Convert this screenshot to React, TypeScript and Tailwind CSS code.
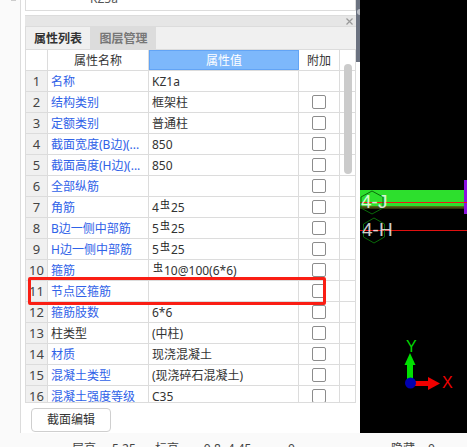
const rows = [
  { name: '名称', value: 'KZ1a', link: true, noCheck: true },
  { name: '结构类别', value: '框架柱', link: true },
  { name: '定额类别', value: '普通柱', link: true },
  { name: '截面宽度(B边)(...', value: '850', link: true },
  { name: '截面高度(H边)(...', value: '850', link: true },
  { name: '全部纵筋', value: '', link: true },
  { name: '角筋', value: '4#25', link: true },
  { name: 'B边一侧中部筋', value: '5#25', link: true },
  { name: 'H边一侧中部筋', value: '5#25', link: true },
  { name: '箍筋', value: ' #10@100(6*6)', link: true },
  { name: '节点区箍筋', value: '', link: true },
  { name: '箍筋肢数', value: '6*6', link: true },
  { name: '柱类型', value: '(中柱)', link: false },
  { name: '材质', value: '现浇混凝土', link: true },
  { name: '混凝土类型', value: '(现浇碎石混凝土)', link: true },
  { name: '混凝土强度等级', value: 'C35', link: true },
];

function Value({ text }: { text: string }) {
  // the rebar grade symbol sits raised above the digits
  const parts = text.split('#');
  if (parts.length === 1) return <>{text}</>;
  return (
    <>
      {parts[0].trim()}
      <span className="relative top-[-3px] mx-px text-[10px] text-[#222]">虫</span>
      {parts[1]}
    </>
  );
}

function Row({ index, name, value, link, noCheck }: { index: number; name: string; value: string; link: boolean; noCheck?: boolean }) {
  return (
    <div className="flex h-[21px] shrink-0 border-b border-[#dcdcdc]">
      <div className="flex w-[23px] shrink-0 items-center justify-center border-x border-[#dcdcdc] bg-[#f0f0f0] pt-px text-[13px] text-[#444]">{index}</div>
      <div className={`flex w-[101px] shrink-0 items-center whitespace-nowrap border-r border-[#dcdcdc] pl-[3px] pt-px text-[12px] ${link ? 'text-[#2f62e8]' : 'text-[#333]'}`}>{name}</div>
      <div className="flex w-[150px] shrink-0 items-center whitespace-pre border-r border-[#dcdcdc] pl-[3px] pt-px text-[12px] text-[#333]">
        <Value text={value} />
      </div>
      <div className="flex w-[41px] shrink-0 items-center justify-center border-r border-[#dcdcdc]">
        {!noCheck && <span className="block h-[14px] w-[14px] rounded-[2px] border border-[#8c8c8c] bg-white" />}
      </div>
    </div>
  );
}

function Canvas() {
  return (
    <div className="relative h-full flex-1 overflow-hidden bg-black font-['Liberation_Sans',sans-serif]">
      <div className="absolute left-0 top-[190px] h-[16px] w-[104px] bg-[#2ddf2d]" />
      <div className="absolute left-0 top-[206px] h-[3px] w-[104px] bg-gradient-to-b from-[#5a7a14] to-[#2a2a08]" />
      <div className="absolute left-[104px] top-[180px] h-[34px] w-[3px] bg-[#8a10e0]" />
      <div className="absolute left-0 top-[202px] h-px w-[107px] bg-[#f01818]" />
      <div className="absolute left-0 top-[230px] h-px w-[107px] bg-[#e01010]" />
      <svg className="absolute left-0 top-[185px]" width="40" height="62" viewBox="0 0 40 62" fill="none" stroke="#0a6a0a" strokeWidth="1">
        <path d="M12 6 L23 12 L23 23 L12 29 L1 23 L1 12 Z" />
        <path d="M14 33 L24.5 39 L24.5 52 L14 58 L3.5 52 L3.5 39 Z" />
      </svg>
      <span className="absolute left-px top-[191px] text-[19px] leading-[22px] text-white/80">4-J</span>
      <span className="absolute left-[2px] top-[219px] text-[19px] leading-[22px] text-white/80">4-H</span>
      <svg className="absolute left-[40px] top-[335px]" width="60" height="60" viewBox="0 0 60 60">
        <rect x="7" y="28" width="6" height="20" fill="#00e000" />
        <path d="M10 18 L15.5 30 L4.5 30 Z" fill="#00e000" />
        <rect x="15" y="46" width="15" height="5" fill="#f00000" />
        <path d="M40 48.5 L28 42 L28 55 Z" fill="#f00000" />
        <circle cx="10.5" cy="48" r="5.5" fill="#0000b0" />
      </svg>
      <span className="absolute left-[46px] top-[339px] text-[16px] leading-[16px] text-[#00d800]">Y</span>
      <span className="absolute left-[82px] top-[375px] text-[16px] leading-[16px] text-[#f00000]">X</span>
    </div>
  );
}

export default function App() {
  return (
    <div className="relative flex h-[447px] w-[467px] flex-col overflow-hidden bg-white font-['Noto_Sans','Noto_Sans_CJK_SC',sans-serif]">
      <div className="flex h-[433px] shrink-0">
        <div className="w-[21px] shrink-0 border-r border-[#dcdcdc] bg-[#fafafa]">
          <div className="ml-[11px] h-px w-[5px] bg-[#cccccc]" />
        </div>
        <div className="flex w-[335px] shrink-0 flex-col pl-[4px]">
          <div className="h-[11px] shrink-0 overflow-hidden border-x border-b border-[#dcdcdc] pl-[64px] text-[12px] leading-[12px] text-[#555]">
            <div className="-mt-[7px]">KZ5a</div>
          </div>
          <div className="mt-[4px] flex h-[12px] shrink-0 items-center justify-end border-y border-[#dcdcdc] bg-[#e6e6e6] pr-[3px]">
            <svg width="7" height="7" viewBox="0 0 7 7" stroke="#999999" strokeWidth="1.2">
              <path d="M0.5 0.5 L6.5 6.5 M6.5 0.5 L0.5 6.5" />
            </svg>
          </div>
          <div className="flex h-[22px] shrink-0 bg-[#f0f0f0] text-[12px] font-bold">
            <div className="flex w-[66px] items-center justify-center border-x border-[#dcdcdc] pt-[2px] text-[#333]">属性列表</div>
            <div className="flex w-[65px] items-center justify-center bg-[#dcdcdc] pt-[2px] text-[#777]">图层管理</div>
          </div>
          <div className="relative flex h-[354px] shrink-0 flex-col overflow-hidden border-b border-r border-[#dcdcdc]">
            <div className="flex h-[22px] shrink-0 border-y border-[#dcdcdc] bg-white text-[12px]">
              <div className="w-[23px] border-x border-[#dcdcdc]" />
              <div className="flex w-[101px] items-center justify-center border-r border-[#dcdcdc] pt-px text-[#333]">属性名称</div>
              <div className="flex w-[150px] items-center justify-center border border-[#62a4f5] bg-[#7db8fb] pt-px text-white">属性值</div>
              <div className="flex w-[41px] items-center justify-center border-r border-[#dcdcdc] pt-px text-[#333]">附加</div>
            </div>
            {rows.map((row, i) => (
              <Row key={row.name} index={i + 1} {...row} />
            ))}
            <div className="absolute left-[319px] top-[15px] h-[110px] w-[8px] rounded-full bg-[#cbcbcb]" />
          </div>
          <div className="pl-[6px] pt-[3px]">
            <button className="h-[24px] w-[80px] rounded-[4px] border border-[#cfcfcf] bg-white text-[12px] text-[#333]">截面编辑</button>
          </div>
        </div>
        <div className="h-full w-[4px] shrink-0 bg-white">
          <div className="relative h-[62px] bg-[#6b7280]">
            <div className="absolute left-px top-[9px] h-[6px] w-[3px] rounded-l-full bg-[#b8bcc4]" />
          </div>
        </div>
        <Canvas />
      </div>
      <div className="relative flex-1 overflow-hidden bg-[#fafafa] text-[12px] leading-[14px] text-[#444]">
        <span className="absolute left-[72px] top-[9px]">层高</span>
        <span className="absolute left-[112px] top-[9px]">5.25</span>
        <span className="absolute left-[155px] top-[9px]">标高</span>
        <span className="absolute left-[200px] top-[9px]">-0.8~4.45</span>
        <span className="absolute left-[288px] top-[9px]">0</span>
        <span className="absolute left-[391px] top-[9px]">隐藏</span>
        <span className="absolute left-[428px] top-[9px]">0</span>
      </div>
      <div className="pointer-events-none absolute left-[28px] top-[277px] h-[28px] w-[298px] rounded-[2px] border-[3px] border-[#fa1e14]" />
    </div>
  );
}
